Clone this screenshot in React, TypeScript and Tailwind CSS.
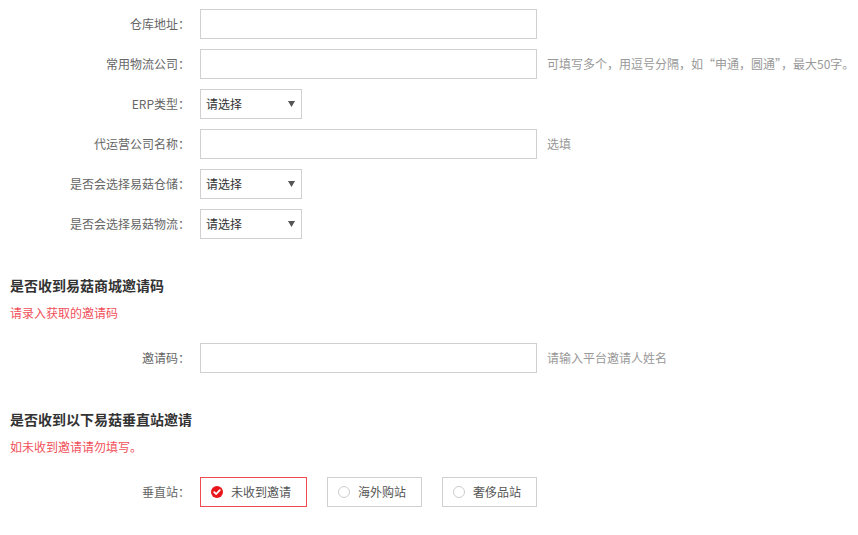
import type { ReactNode } from "react";

const FONT = "font-['Microsoft_YaHei','Noto_Sans_CJK_SC',sans-serif]";

function Row({ label, children }: { label: string; children: ReactNode }) {
  return (
    <div className="flex h-[30px] items-center">
      <div className="w-[190px] text-right leading-[30px] text-[#666]">{label}</div>
      <div className="ml-[10px] flex items-center">{children}</div>
    </div>
  );
}

function TextInput() {
  return <div className="h-[30px] w-[337px] border border-[#d0d0d0] bg-white" />;
}

function Hint({ children }: { children: ReactNode }) {
  return <span className="ml-[10px] whitespace-nowrap text-[#999]">{children}</span>;
}

function Select() {
  return (
    <div className="flex h-[30px] w-[102px] items-center justify-between border border-[#d0d0d0] bg-white pl-[5px] pr-[6px] text-[#333]">
      <span>请选择</span>
      <svg width="7" height="6" viewBox="0 0 7 6">
        <path d="M0 0 H7 L3.5 6 Z" fill="#555" />
      </svg>
    </div>
  );
}

function Radio({ label, checked }: { label: string; checked?: boolean }) {
  return (
    <div
      className={
        checked
          ? "flex h-[30px] items-center border border-[#ef4a4f] pl-[10px] pr-[15px] text-[#555]"
          : "flex h-[30px] items-center border border-[#d0d0d0] pl-[10px] pr-[15px] text-[#555]"
      }
    >
      {checked ? (
        <svg width="12" height="12" viewBox="0 0 12 12">
          <circle cx="6" cy="6" r="6" fill="#e8161c" />
          <path d="M3.2 6.1 L5.2 8 L8.8 4.2" stroke="#fff" strokeWidth="1.8" fill="none" strokeLinecap="round" strokeLinejoin="round" />
        </svg>
      ) : (
        <span className="h-[12px] w-[12px] rounded-full border border-[#ccc]" />
      )}
      <span className="ml-[8px]">{label}</span>
    </div>
  );
}

function SectionTitle({ title, note }: { title: string; note: string }) {
  return (
    <div className="mt-[36px] pl-[10px]">
      <div className="h-[20px] text-[14px] font-bold leading-[20px] text-[#333]">{title}</div>
      <div className="mt-[8px] h-[20px] leading-[20px] text-[#f0505a]">{note}</div>
    </div>
  );
}

export default function App() {
  return (
    <div className={`h-[535px] w-[858px] overflow-hidden bg-white pt-[9px] text-[12px] ${FONT}`}>
      <div className="flex flex-col gap-[10px]">
        <Row label="仓库地址：">
          <TextInput />
        </Row>
        <Row label="常用物流公司：">
          <TextInput />
          <Hint>可填写多个，用逗号分隔，如“申通，圆通”，最大50字。</Hint>
        </Row>
        <Row label="ERP类型：">
          <Select />
        </Row>
        <Row label="代运营公司名称：">
          <TextInput />
          <Hint>选填</Hint>
        </Row>
        <Row label="是否会选择易菇仓储：">
          <Select />
        </Row>
        <Row label="是否会选择易菇物流：">
          <Select />
        </Row>
      </div>

      <SectionTitle title="是否收到易菇商城邀请码" note="请录入获取的邀请码" />
      <div className="mt-[20px]">
        <Row label="邀请码：">
          <TextInput />
          <Hint>请输入平台邀请人姓名</Hint>
        </Row>
      </div>

      <SectionTitle title="是否收到以下易菇垂直站邀请" note="如未收到邀请请勿填写。" />
      <div className="mt-[20px]">
        <Row label="垂直站：">
          <div className="flex gap-[20px]">
            <Radio label="未收到邀请" checked />
            <Radio label="海外购站" />
            <Radio label="奢侈品站" />
          </div>
        </Row>
      </div>
    </div>
  );
}
